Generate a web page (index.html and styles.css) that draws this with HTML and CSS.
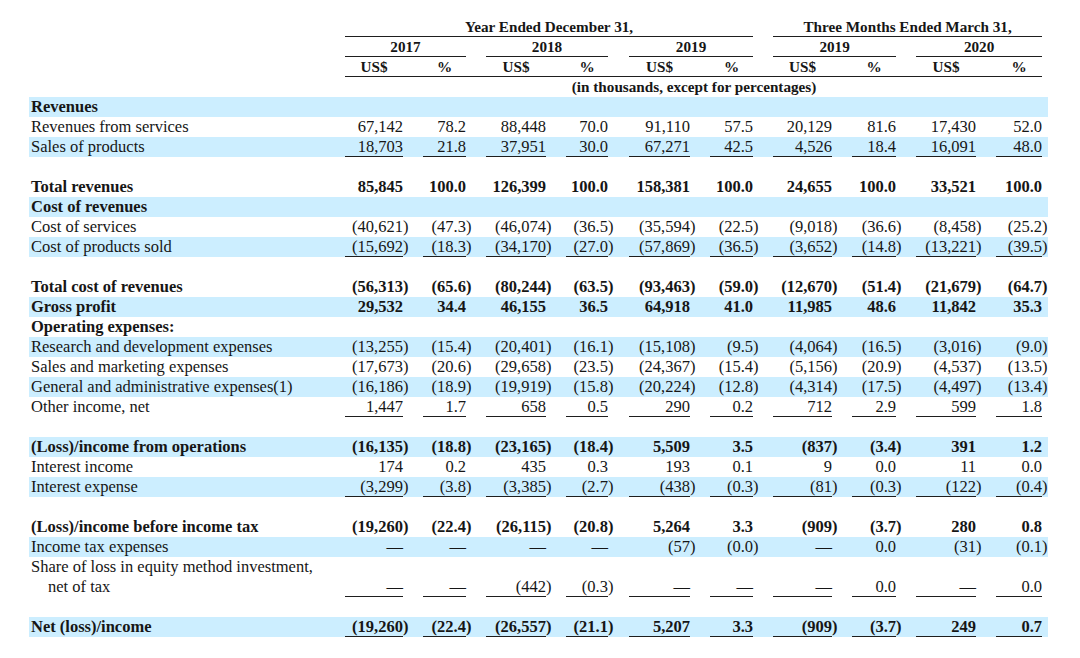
FILE: index.html
```html
<!DOCTYPE html>
<html lang="en">
<head>
<meta charset="utf-8">
<title>Consolidated statements of operations</title>
<link rel="stylesheet" href="styles.css">
</head>
<body>
<table class="fin">
  <colgroup>
    <col class="w-lab"><col class="w1"><col class="w2"><col class="w3"><col class="w4"><col class="w5"><col class="w6"><col class="w7"><col class="w8"><col class="w9"><col class="w10">
  </colgroup>
  <tbody>
    <tr class="hr">
      <td></td>
      <td colspan="6" class="hc"><div class="hl">Year Ended December 31,</div></td>
      <td colspan="4" class="hc p20 pr6"><div class="hl">Three Months Ended March 31,</div></td>
    </tr>
    <tr class="hr">
      <td></td>
      <td colspan="2" class="hc"><div class="hl">2017</div></td>
      <td colspan="2" class="hc p20"><div class="hl">2018</div></td>
      <td colspan="2" class="hc p21"><div class="hl">2019</div></td>
      <td colspan="2" class="hc p20"><div class="hl">2019</div></td>
      <td colspan="2" class="hc p20 pr6"><div class="hl">2020</div></td>
    </tr>
    <tr class="hr">
      <td></td>
      <td class="hc"><div class="hl">US$</div></td>
      <td class="hc p20"><div class="hl ext">%</div></td>
      <td class="hc p20"><div class="hl ext">US$</div></td>
      <td class="hc p20"><div class="hl ext">%</div></td>
      <td class="hc p21"><div class="hl ext21">US$</div></td>
      <td class="hc p20"><div class="hl ext">%</div></td>
      <td class="hc p20"><div class="hl ext">US$</div></td>
      <td class="hc p20"><div class="hl ext">%</div></td>
      <td class="hc p20"><div class="hl ext">US$</div></td>
      <td class="hc p20 pr6"><div class="hl ext">%</div></td>
    </tr>
    <tr class="hr">
      <td></td>
      <td colspan="10" class="hc"><div class="hx">(in thousands, except for percentages)</div></td>
    </tr>

    <tr class="s b"><td class="lab">Revenues</td><td></td><td></td><td></td><td></td><td></td><td></td><td></td><td></td><td></td><td class="pr6"></td></tr>
    <tr>
      <td class="lab">Revenues from services</td>
      <td class="n"><div class="v">67,142</div></td><td class="n p20"><div class="v">78.2</div></td>
      <td class="n p20"><div class="v">88,448</div></td><td class="n p20"><div class="v">70.0</div></td>
      <td class="n p21"><div class="v">91,110</div></td><td class="n p20"><div class="v">57.5</div></td>
      <td class="n p20"><div class="v">20,129</div></td><td class="n p20"><div class="v">81.6</div></td>
      <td class="n p20"><div class="v">17,430</div></td><td class="n p20 pr6"><div class="v">52.0</div></td>
    </tr>
    <tr class="s u">
      <td class="lab">Sales of products</td>
      <td class="n"><div class="v">18,703</div></td><td class="n p20"><div class="v">21.8</div></td>
      <td class="n p20"><div class="v">37,951</div></td><td class="n p20"><div class="v">30.0</div></td>
      <td class="n p21"><div class="v">67,271</div></td><td class="n p20"><div class="v">42.5</div></td>
      <td class="n p20"><div class="v">4,526</div></td><td class="n p20"><div class="v">18.4</div></td>
      <td class="n p20"><div class="v">16,091</div></td><td class="n p20 pr6"><div class="v">48.0</div></td>
    </tr>
    <tr class="gap"><td colspan="11"></td></tr>
    <tr class="b">
      <td class="lab">Total revenues</td>
      <td class="n"><div class="v">85,845</div></td><td class="n p20"><div class="v">100.0</div></td>
      <td class="n p20"><div class="v">126,399</div></td><td class="n p20"><div class="v">100.0</div></td>
      <td class="n p21"><div class="v">158,381</div></td><td class="n p20"><div class="v">100.0</div></td>
      <td class="n p20"><div class="v">24,655</div></td><td class="n p20"><div class="v">100.0</div></td>
      <td class="n p20"><div class="v">33,521</div></td><td class="n p20 pr6"><div class="v">100.0</div></td>
    </tr>
    <tr class="s b"><td class="lab">Cost of revenues</td><td></td><td></td><td></td><td></td><td></td><td></td><td></td><td></td><td></td><td class="pr6"></td></tr>
    <tr>
      <td class="lab">Cost of services</td>
      <td class="n"><div class="v">(40,621<span class="rp">)</span></div></td><td class="n p20"><div class="v">(47.3<span class="rp">)</span></div></td>
      <td class="n p20"><div class="v">(46,074<span class="rp">)</span></div></td><td class="n p20"><div class="v">(36.5<span class="rp">)</span></div></td>
      <td class="n p21"><div class="v">(35,594<span class="rp">)</span></div></td><td class="n p20"><div class="v">(22.5<span class="rp">)</span></div></td>
      <td class="n p20"><div class="v">(9,018<span class="rp">)</span></div></td><td class="n p20"><div class="v">(36.6<span class="rp">)</span></div></td>
      <td class="n p20"><div class="v">(8,458<span class="rp">)</span></div></td><td class="n p20 pr6"><div class="v">(25.2<span class="rp">)</span></div></td>
    </tr>
    <tr class="s u">
      <td class="lab">Cost of products sold</td>
      <td class="n"><div class="v">(15,692<span class="rp">)</span></div></td><td class="n p20"><div class="v">(18.3<span class="rp">)</span></div></td>
      <td class="n p20"><div class="v">(34,170<span class="rp">)</span></div></td><td class="n p20"><div class="v">(27.0<span class="rp">)</span></div></td>
      <td class="n p21"><div class="v">(57,869<span class="rp">)</span></div></td><td class="n p20"><div class="v">(36.5<span class="rp">)</span></div></td>
      <td class="n p20"><div class="v">(3,652<span class="rp">)</span></div></td><td class="n p20"><div class="v">(14.8<span class="rp">)</span></div></td>
      <td class="n p20"><div class="v">(13,221<span class="rp">)</span></div></td><td class="n p20 pr6"><div class="v">(39.5<span class="rp">)</span></div></td>
    </tr>
    <tr class="gap"><td colspan="11"></td></tr>
    <tr class="b">
      <td class="lab">Total cost of revenues</td>
      <td class="n"><div class="v">(56,313<span class="rp">)</span></div></td><td class="n p20"><div class="v">(65.6<span class="rp">)</span></div></td>
      <td class="n p20"><div class="v">(80,244<span class="rp">)</span></div></td><td class="n p20"><div class="v">(63.5<span class="rp">)</span></div></td>
      <td class="n p21"><div class="v">(93,463<span class="rp">)</span></div></td><td class="n p20"><div class="v">(59.0<span class="rp">)</span></div></td>
      <td class="n p20"><div class="v">(12,670<span class="rp">)</span></div></td><td class="n p20"><div class="v">(51.4<span class="rp">)</span></div></td>
      <td class="n p20"><div class="v">(21,679<span class="rp">)</span></div></td><td class="n p20 pr6"><div class="v">(64.7<span class="rp">)</span></div></td>
    </tr>
    <tr class="s b">
      <td class="lab">Gross profit</td>
      <td class="n"><div class="v">29,532</div></td><td class="n p20"><div class="v">34.4</div></td>
      <td class="n p20"><div class="v">46,155</div></td><td class="n p20"><div class="v">36.5</div></td>
      <td class="n p21"><div class="v">64,918</div></td><td class="n p20"><div class="v">41.0</div></td>
      <td class="n p20"><div class="v">11,985</div></td><td class="n p20"><div class="v">48.6</div></td>
      <td class="n p20"><div class="v">11,842</div></td><td class="n p20 pr6"><div class="v">35.3</div></td>
    </tr>
    <tr class="b"><td class="lab">Operating expenses:</td><td></td><td></td><td></td><td></td><td></td><td></td><td></td><td></td><td></td><td class="pr6"></td></tr>
    <tr class="s">
      <td class="lab">Research and development expenses</td>
      <td class="n"><div class="v">(13,255<span class="rp">)</span></div></td><td class="n p20"><div class="v">(15.4<span class="rp">)</span></div></td>
      <td class="n p20"><div class="v">(20,401<span class="rp">)</span></div></td><td class="n p20"><div class="v">(16.1<span class="rp">)</span></div></td>
      <td class="n p21"><div class="v">(15,108<span class="rp">)</span></div></td><td class="n p20"><div class="v">(9.5<span class="rp">)</span></div></td>
      <td class="n p20"><div class="v">(4,064<span class="rp">)</span></div></td><td class="n p20"><div class="v">(16.5<span class="rp">)</span></div></td>
      <td class="n p20"><div class="v">(3,016<span class="rp">)</span></div></td><td class="n p20 pr6"><div class="v">(9.0<span class="rp">)</span></div></td>
    </tr>
    <tr>
      <td class="lab">Sales and marketing expenses</td>
      <td class="n"><div class="v">(17,673<span class="rp">)</span></div></td><td class="n p20"><div class="v">(20.6<span class="rp">)</span></div></td>
      <td class="n p20"><div class="v">(29,658<span class="rp">)</span></div></td><td class="n p20"><div class="v">(23.5<span class="rp">)</span></div></td>
      <td class="n p21"><div class="v">(24,367<span class="rp">)</span></div></td><td class="n p20"><div class="v">(15.4<span class="rp">)</span></div></td>
      <td class="n p20"><div class="v">(5,156<span class="rp">)</span></div></td><td class="n p20"><div class="v">(20.9<span class="rp">)</span></div></td>
      <td class="n p20"><div class="v">(4,537<span class="rp">)</span></div></td><td class="n p20 pr6"><div class="v">(13.5<span class="rp">)</span></div></td>
    </tr>
    <tr class="s">
      <td class="lab">General and administrative expenses(1)</td>
      <td class="n"><div class="v">(16,186<span class="rp">)</span></div></td><td class="n p20"><div class="v">(18.9<span class="rp">)</span></div></td>
      <td class="n p20"><div class="v">(19,919<span class="rp">)</span></div></td><td class="n p20"><div class="v">(15.8<span class="rp">)</span></div></td>
      <td class="n p21"><div class="v">(20,224<span class="rp">)</span></div></td><td class="n p20"><div class="v">(12.8<span class="rp">)</span></div></td>
      <td class="n p20"><div class="v">(4,314<span class="rp">)</span></div></td><td class="n p20"><div class="v">(17.5<span class="rp">)</span></div></td>
      <td class="n p20"><div class="v">(4,497<span class="rp">)</span></div></td><td class="n p20 pr6"><div class="v">(13.4<span class="rp">)</span></div></td>
    </tr>
    <tr class="u">
      <td class="lab">Other income, net</td>
      <td class="n"><div class="v">1,447</div></td><td class="n p20"><div class="v">1.7</div></td>
      <td class="n p20"><div class="v">658</div></td><td class="n p20"><div class="v">0.5</div></td>
      <td class="n p21"><div class="v">290</div></td><td class="n p20"><div class="v">0.2</div></td>
      <td class="n p20"><div class="v">712</div></td><td class="n p20"><div class="v">2.9</div></td>
      <td class="n p20"><div class="v">599</div></td><td class="n p20 pr6"><div class="v">1.8</div></td>
    </tr>
    <tr class="gap"><td colspan="11"></td></tr>
    <tr class="s b">
      <td class="lab">(Loss)/income from operations</td>
      <td class="n"><div class="v">(16,135<span class="rp">)</span></div></td><td class="n p20"><div class="v">(18.8<span class="rp">)</span></div></td>
      <td class="n p20"><div class="v">(23,165<span class="rp">)</span></div></td><td class="n p20"><div class="v">(18.4<span class="rp">)</span></div></td>
      <td class="n p21"><div class="v">5,509</div></td><td class="n p20"><div class="v">3.5</div></td>
      <td class="n p20"><div class="v">(837<span class="rp">)</span></div></td><td class="n p20"><div class="v">(3.4<span class="rp">)</span></div></td>
      <td class="n p20"><div class="v">391</div></td><td class="n p20 pr6"><div class="v">1.2</div></td>
    </tr>
    <tr>
      <td class="lab">Interest income</td>
      <td class="n"><div class="v">174</div></td><td class="n p20"><div class="v">0.2</div></td>
      <td class="n p20"><div class="v">435</div></td><td class="n p20"><div class="v">0.3</div></td>
      <td class="n p21"><div class="v">193</div></td><td class="n p20"><div class="v">0.1</div></td>
      <td class="n p20"><div class="v">9</div></td><td class="n p20"><div class="v">0.0</div></td>
      <td class="n p20"><div class="v">11</div></td><td class="n p20 pr6"><div class="v">0.0</div></td>
    </tr>
    <tr class="s u">
      <td class="lab">Interest expense</td>
      <td class="n"><div class="v">(3,299<span class="rp">)</span></div></td><td class="n p20"><div class="v">(3.8<span class="rp">)</span></div></td>
      <td class="n p20"><div class="v">(3,385<span class="rp">)</span></div></td><td class="n p20"><div class="v">(2.7<span class="rp">)</span></div></td>
      <td class="n p21"><div class="v">(438<span class="rp">)</span></div></td><td class="n p20"><div class="v">(0.3<span class="rp">)</span></div></td>
      <td class="n p20"><div class="v">(81<span class="rp">)</span></div></td><td class="n p20"><div class="v">(0.3<span class="rp">)</span></div></td>
      <td class="n p20"><div class="v">(122<span class="rp">)</span></div></td><td class="n p20 pr6"><div class="v">(0.4<span class="rp">)</span></div></td>
    </tr>
    <tr class="gap"><td colspan="11"></td></tr>
    <tr class="b">
      <td class="lab">(Loss)/income before income tax</td>
      <td class="n"><div class="v">(19,260<span class="rp">)</span></div></td><td class="n p20"><div class="v">(22.4<span class="rp">)</span></div></td>
      <td class="n p20"><div class="v">(26,115<span class="rp">)</span></div></td><td class="n p20"><div class="v">(20.8<span class="rp">)</span></div></td>
      <td class="n p21"><div class="v">5,264</div></td><td class="n p20"><div class="v">3.3</div></td>
      <td class="n p20"><div class="v">(909<span class="rp">)</span></div></td><td class="n p20"><div class="v">(3.7<span class="rp">)</span></div></td>
      <td class="n p20"><div class="v">280</div></td><td class="n p20 pr6"><div class="v">0.8</div></td>
    </tr>
    <tr class="s">
      <td class="lab">Income tax expenses</td>
      <td class="n"><div class="v">—</div></td><td class="n p20"><div class="v">—</div></td>
      <td class="n p20"><div class="v">—</div></td><td class="n p20"><div class="v">—</div></td>
      <td class="n p21"><div class="v">(57<span class="rp">)</span></div></td><td class="n p20"><div class="v">(0.0<span class="rp">)</span></div></td>
      <td class="n p20"><div class="v">—</div></td><td class="n p20"><div class="v">0.0</div></td>
      <td class="n p20"><div class="v">(31<span class="rp">)</span></div></td><td class="n p20 pr6"><div class="v">(0.1<span class="rp">)</span></div></td>
    </tr>
    <tr class="u tall">
      <td class="lab">Share of loss in equity method investment,<span class="ind">net of tax</span></td>
      <td class="n"><div class="v">—</div></td><td class="n p20"><div class="v">—</div></td>
      <td class="n p20"><div class="v">(442<span class="rp">)</span></div></td><td class="n p20"><div class="v">(0.3<span class="rp">)</span></div></td>
      <td class="n p21"><div class="v">—</div></td><td class="n p20"><div class="v">—</div></td>
      <td class="n p20"><div class="v">—</div></td><td class="n p20"><div class="v">0.0</div></td>
      <td class="n p20"><div class="v">—</div></td><td class="n p20 pr6"><div class="v">0.0</div></td>
    </tr>
    <tr class="gap"><td colspan="11"></td></tr>
    <tr class="s b d">
      <td class="lab">Net (loss)/income</td>
      <td class="n"><div class="v">(19,260<span class="rp">)</span></div></td><td class="n p20"><div class="v">(22.4<span class="rp">)</span></div></td>
      <td class="n p20"><div class="v">(26,557<span class="rp">)</span></div></td><td class="n p20"><div class="v">(21.1<span class="rp">)</span></div></td>
      <td class="n p21"><div class="v">5,207</div></td><td class="n p20"><div class="v">3.3</div></td>
      <td class="n p20"><div class="v">(909<span class="rp">)</span></div></td><td class="n p20"><div class="v">(3.7<span class="rp">)</span></div></td>
      <td class="n p20"><div class="v">249</div></td><td class="n p20 pr6"><div class="v">0.7</div></td>
    </tr>
  </tbody>
</table>
</body>
</html>
```

FILE: styles.css
```css
html, body {
  margin: 0;
  padding: 0;
  background: #ffffff;
}

body {
  color: #161616;
  font-family: "Liberation Serif", "Times New Roman", serif;
  font-size: 16.5px;
}

.fin {
  border-collapse: collapse;
  border-spacing: 0;
  table-layout: fixed;
  width: 1019px;
  margin: 17px 0 0 29px;
}

.w-lab { width: 316px; }
.w1 { width: 58px; }
.w2 { width: 63px; }
.w3 { width: 80px; }
.w4 { width: 62px; }
.w5 { width: 82px; }
.w6 { width: 63px; }
.w7 { width: 79px; }
.w8 { width: 64px; }
.w9 { width: 80px; }
.w10 { width: 72px; }

.fin td {
  padding: 0;
  line-height: 20px;
  height: 20px;
  vertical-align: bottom;
  white-space: nowrap;
}

.p20 { padding-left: 20px !important; }
.p21 { padding-left: 21px !important; }
.pr6 { padding-right: 6px !important; }

/* header */
.hc {
  font-weight: bold;
  font-size: 15.2px;
  text-align: center;
}

.hl {
  height: 20px;
  box-sizing: border-box;
  line-height: 19px;
  border-bottom: 1px solid #1e1e1e;
  text-align: center;
}

.ext {
  margin-left: -20px;
  padding-left: 20px;
}

.ext21 {
  margin-left: -21px;
  padding-left: 21px;
}

.hx {
  height: 20px;
  line-height: 20px;
  text-align: center;
  padding-right: 5px;
}

/* body rows */
.s td { background: #cceeff; }
.b td { font-weight: bold; }

.lab {
  padding-left: 2px !important;
}

.ind {
  display: block;
  padding-left: 17px;
}

.v {
  height: 20px;
  box-sizing: border-box;
  text-align: right;
  line-height: 20px;
}

.rp {
  margin-right: -0.333em;
}

.u .v { border-bottom: 1px solid #1e1e1e; }

.d .v {
  border-bottom: 1px solid #1e1e1e;
  box-shadow: 0 2px 0 0 #ffffff, 0 3px 0 0 #1e1e1e;
}

.tall td { height: 40px; }
.tall .v { height: 20px; }

.gap td { height: 20px; }
```
